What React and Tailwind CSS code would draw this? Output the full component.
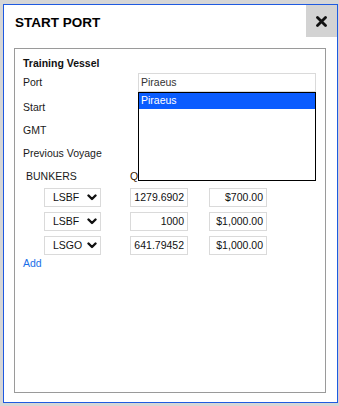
function Chevron() {
  return (
    <svg width="10" height="7" viewBox="0 0 10 7" className="shrink-0">
      <polyline points="1.5,1.5 5,5 8.5,1.5" fill="none" stroke="#111" strokeWidth="2.4" strokeLinecap="round" strokeLinejoin="round" />
    </svg>
  );
}

function BunkerRow({ fuel, qty, price }) {
  return (
    <div className="flex items-center h-[19px]">
      <div className="ml-[29px] w-[57px] h-[19px] border border-[#dadada] flex items-center justify-between pl-[8px] pr-[3px] text-[#111]">
        <span>{fuel}</span>
        <Chevron />
      </div>
      <div className="ml-[29px] w-[58px] h-[19px] border border-[#dadada] flex items-center justify-end pr-[3px] text-[#111]">
        {qty}
      </div>
      <div className="ml-[21px] w-[58px] h-[19px] border border-[#dadada] flex items-center justify-end pr-[3px] text-[#111]">
        {price}
      </div>
    </div>
  );
}

export default function App() {
  const rows = [
    { fuel: "LSBF", qty: "1279.6902", price: "$700.00" },
    { fuel: "LSBF", qty: "1000", price: "$1,000.00" },
    { fuel: "LSGO", qty: "641.79452", price: "$1,000.00" },
  ];

  return (
    <div className="w-[339px] h-[406px] bg-[#d6d6d6] overflow-hidden pt-[4px] pl-[3px] font-['Liberation_Sans',Arial,sans-serif] text-[10.5px] text-[#1a1a1a]">
      {/* modal */}
      <div className="w-[335px] h-[399px] border border-[#1f5ae0] bg-white">
        <div className="flex h-[32px]">
          <div className="flex-1 pl-[11px] pt-[10px] text-[13.5px] font-bold leading-[16px] text-black">START PORT</div>
          <div className="w-[31px] h-[32px] bg-[#d3d3d3] flex items-center justify-center pt-[1px]">
            <svg width="11" height="11" viewBox="0 0 11 11">
              <path d="M1.5 1.5 L9.5 9.5 M9.5 1.5 L1.5 9.5" stroke="#111" strokeWidth="2.8" strokeLinecap="round" />
            </svg>
          </div>
        </div>

        {/* panel */}
        <div className="relative ml-[10px] mt-[11px] w-[312px] h-[345px] border border-[#9a9a9a]">
          <div className="pl-[8px] pt-[7px]">
            <div className="font-bold leading-[14px] text-[#111]">Training Vessel</div>

            <div className="flex items-center h-[19px] mt-[3px]">
              <div className="w-[115px]">Port</div>
              <div className="w-[178px] h-[19px] border border-[#dadada] flex items-center pl-[2px] text-[#333]">Piraeus</div>
            </div>
            <div className="flex items-center h-[23px] mt-[4px]">Start</div>
            <div className="flex items-center h-[23px]">GMT</div>
            <div className="flex items-center h-[23px]">Previous Voyage</div>

            <div className="flex items-center h-[23px]">
              <div className="w-[107px] pl-[3px]">BUNKERS</div>
              <div className="text-[#3a1a00]">Q</div>
            </div>

            <div className="flex flex-col gap-[5px] -ml-[8px]">
              {rows.map((r, i) => (
                <BunkerRow key={i} {...r} />
              ))}
            </div>

            <div className="h-[18px] flex items-center text-[#1a6fe8]">Add</div>
          </div>

          {/* open port list */}
          <div className="absolute left-[123px] top-[43px] w-[178px] h-[89px] border border-black bg-white">
            <div className="h-[16px] bg-[#0a5cff] text-white flex items-center pl-[2px]">Piraeus</div>
          </div>
        </div>
      </div>
    </div>
  );
}
